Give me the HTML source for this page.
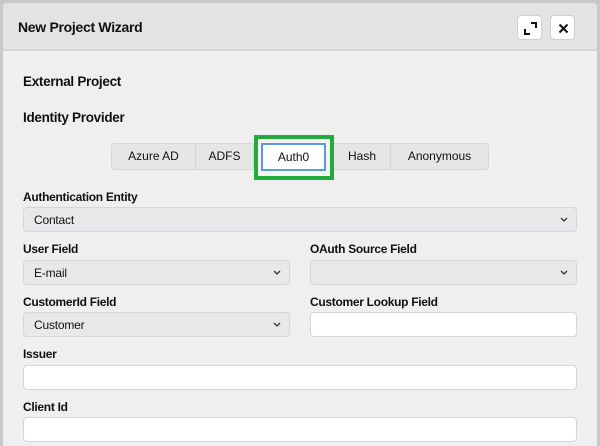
<!DOCTYPE html>
<html style="width:600px;height:446px;overflow:hidden"><head><style>
*{box-sizing:border-box;margin:0;padding:0}
body{width:600px;height:446px;background:#c9c9c9;font-family:"Liberation Sans",Arial,sans-serif;position:relative;overflow:hidden;color:#111}
.dlg{position:absolute;left:3px;top:3px;width:594px;height:443px;background:#efefef;border-radius:4px 4px 0 0;overflow:hidden}
.hdr{position:absolute;left:0;top:0;width:100%;height:48px;background:#e3e3e3;border-bottom:2px solid #d6d6d6}
.title{position:absolute;left:15px;top:16px;font-size:14px;font-weight:bold;letter-spacing:-0.3px}
.ib{position:absolute;top:12px;width:25px;height:25px;background:#fff;border:1px solid #d0d0d0;border-radius:4px}
.a{position:absolute;font-size:13.5px;font-weight:bold;letter-spacing:-0.3px}
.lbl{position:absolute;font-size:12px;font-weight:bold;letter-spacing:-0.3px}
.sel,.inp{position:absolute;height:25px;border:1px solid #d6d6d6;border-radius:4px;font-size:12px;padding:5px 10px;letter-spacing:-0.2px}
.sel{background:#e8e8ea}
.inp{background:#fff}
.sel svg{position:absolute;right:8px;top:9px}
.tabs{position:absolute;left:108px;top:140px;width:378px;height:27px;border:1px solid #d6d6d6;border-radius:4px;background:#e6e6e6}
.t{position:absolute;top:0;height:25px;font-size:12px;line-height:25px;text-align:center;border-right:1px solid #d6d6d6}
</style></head><body>
<div class="dlg">
<div class="hdr">
<div class="title">New Project Wizard</div>
<div class="ib" style="left:514px"><svg width="25" height="25" viewBox="0 0 25 25"><path d="M7 13v5h5M18 12V7h-5" fill="none" stroke="#111" stroke-width="2"/></svg></div>
<div class="ib" style="left:547px"><svg width="25" height="25" viewBox="0 0 25 25"><path d="M8.5 8.5l8 8M16.5 8.5l-8 8" stroke="#111" stroke-width="2"/></svg></div>
</div>
<div class="a" style="left:20px;top:71px">External Project</div>
<div class="a" style="left:20px;top:107px">Identity Provider</div>
<div class="tabs">
<div class="t" style="left:0;width:84px">Azure AD</div>
<div class="t" style="left:84px;width:58px">ADFS</div>
<div class="t" style="left:222px;width:57px">Hash</div>
<div class="t" style="left:279px;width:97px;border:none">Anonymous</div>
</div>
<div style="position:absolute;left:251px;top:132px;width:80px;height:45px;border:4px solid #22aa3a;background:#f4f4f4"></div>
<div style="position:absolute;left:258px;top:140px;width:65px;height:28px;background:#fff;border:2px solid #5a9be0;font-size:12px;line-height:24px;text-align:center">Auth0</div>

<div class="lbl" style="left:20px;top:187px">Authentication Entity</div>
<div class="sel" style="left:20px;top:204px;width:554px">Contact<svg width="8" height="6"><path d="M1 1l3 3 3-3" fill="none" stroke="#333" stroke-width="1.3"/></svg></div>

<div class="lbl" style="left:20px;top:239px">User Field</div>
<div class="sel" style="left:20px;top:257px;width:267px">E-mail<svg width="8" height="6"><path d="M1 1l3 3 3-3" fill="none" stroke="#333" stroke-width="1.3"/></svg></div>
<div class="lbl" style="left:307px;top:239px">OAuth Source Field</div>
<div class="sel" style="left:307px;top:257px;width:267px"><svg width="8" height="6"><path d="M1 1l3 3 3-3" fill="none" stroke="#333" stroke-width="1.3"/></svg></div>

<div class="lbl" style="left:20px;top:292px">CustomerId Field</div>
<div class="sel" style="left:20px;top:309px;width:267px">Customer<svg width="8" height="6"><path d="M1 1l3 3 3-3" fill="none" stroke="#333" stroke-width="1.3"/></svg></div>
<div class="lbl" style="left:307px;top:292px">Customer Lookup Field</div>
<div class="inp" style="left:307px;top:309px;width:267px"></div>

<div class="lbl" style="left:20px;top:344px">Issuer</div>
<div class="inp" style="left:20px;top:362px;width:554px"></div>
<div class="lbl" style="left:20px;top:397px">Client Id</div>
<div class="inp" style="left:20px;top:414px;width:554px"></div>
</div>
</body></html>
